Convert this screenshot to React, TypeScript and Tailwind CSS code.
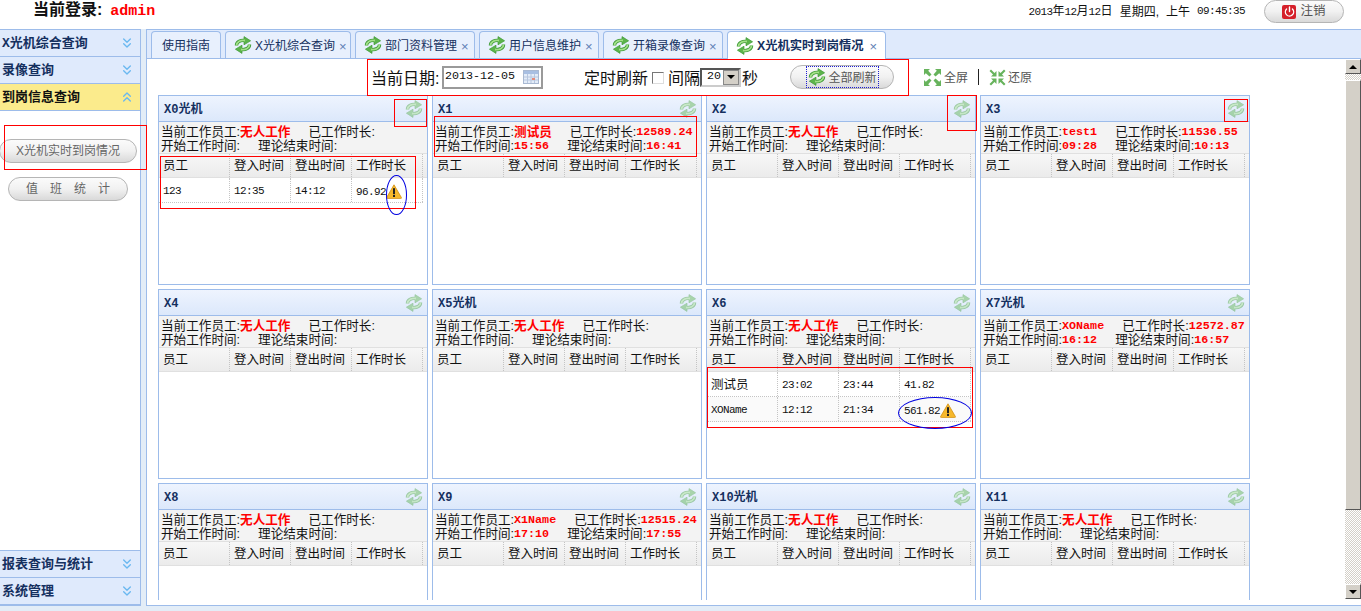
import React from 'react';
import { ChevronsDown, ChevronsUp, Power } from 'lucide-react';

const slab = "font-['Liberation_Mono','Noto_Sans_CJK_SC',monospace]";
const cjk = "font-['Liberation_Sans','Noto_Sans_CJK_SC',sans-serif]";

type Row = { name: string; latin?: boolean; in: string; out: string; dur: string; warn?: boolean };
type CardData = {
  title: string;
  worker?: string;
  workerLatin?: boolean;
  hours?: string;
  start?: string;
  end?: string;
  rows?: Row[];
};

const cards: CardData[] = [
  { title: 'X0光机', rows: [{ name: '123', latin: true, in: '12:35', out: '14:12', dur: '96.92', warn: true }] },
  { title: 'X1', worker: '测试员', hours: '12589.24', start: '15:56', end: '16:41' },
  { title: 'X2' },
  { title: 'X3', worker: 'test1', workerLatin: true, hours: '11536.55', start: '09:28', end: '10:13' },
  { title: 'X4' },
  { title: 'X5光机' },
  {
    title: 'X6',
    rows: [
      { name: '测试员', in: '23:02', out: '23:44', dur: '41.82' },
      { name: 'XOName', latin: true, in: '12:12', out: '21:34', dur: '561.82', warn: true },
    ],
  },
  { title: 'X7光机', worker: 'XOName', workerLatin: true, hours: '12572.87', start: '16:12', end: '16:57' },
  { title: 'X8' },
  { title: 'X9', worker: 'X1Name', workerLatin: true, hours: '12515.24', start: '17:10', end: '17:55' },
  { title: 'X10光机' },
  { title: 'X11' },
];

const tabs = [
  { label: 'X光机综合查询', w: 'w-[126px]' },
  { label: '部门资料管理', w: 'w-[120px]' },
  { label: '用户信息维护', w: 'w-[120px]' },
  { label: '开箱录像查询', w: 'w-[120px]' },
];

const RefreshIcon = ({ faded }: { faded?: boolean }) => (
  <svg width="18" height="18" viewBox="0 0 18 18" className={faded ? 'opacity-45 shrink-0' : 'shrink-0'}>
    <g>
      <path d="M2.500 9.500C2.500 6 6 3.800 11 4.500" fill="none" stroke="#3f9a38" strokeWidth="3.400" />
      <path d="M10 .6 16.600 4.800 10 8.800Z" fill="#5cb44a" stroke="#3f9a38" strokeWidth="0.700" strokeLinejoin="round" />
      <path d="M2.500 9.500C2.500 6 6 3.800 11 4.500" fill="none" stroke="#a3e088" strokeWidth="1.800" />
    </g>
    <g transform="rotate(180 9 9)">
      <path d="M2.500 9.500C2.500 6 6 3.800 11 4.500" fill="none" stroke="#3f9a38" strokeWidth="3.400" />
      <path d="M10 .6 16.600 4.800 10 8.800Z" fill="#5cb44a" stroke="#3f9a38" strokeWidth="0.700" strokeLinejoin="round" />
      <path d="M2.500 9.500C2.500 6 6 3.800 11 4.500" fill="none" stroke="#a3e088" strokeWidth="1.800" />
    </g>
  </svg>
);

const WarnIcon = () => (
  <svg width="16" height="15" viewBox="0 0 16 15" className="shrink-0">
    <path d="M8 .8 15.400 13.600a.8.8 0 0 1-.7 1H1.300a.8.8 0 0 1-.7-1Z" fill="#f6b82c" stroke="#d18f14" strokeWidth="0.800" />
    <rect x="7" y="4.200" width="2" height="6" fill="#222" />
    <rect x="7" y="11" width="2" height="2" fill="#222" />
  </svg>
);

const CalendarIcon = () => (
  <svg width="16" height="14" viewBox="0 0 16 14">
    <rect x="0.500" y="0.500" width="15" height="13" fill="#e3ecf8" stroke="#a9b9d2" />
    <rect x="1" y="1" width="14" height="3" fill="#a8bfe2" />
    <path d="M1 7h14M1 10h14M4.500 4v9M8 4v9M11.500 4v9" stroke="#b7c6de" strokeWidth="1" />
    <rect x="9" y="8" width="3" height="2" fill="#e58b7a" />
  </svg>
);

const ExpandIcon = ({ inward }: { inward?: boolean }) => (
  <svg width="17" height="17" viewBox="0 0 17 17">
    <g fill="#67b35c">
      {inward ? (
        <>
          <path d="M7.500 7.500V2L5.500 4 2 .5.500 2 4 5.500 2 7.500Z" />
          <path d="M9.500 7.500V2L11.500 4 15 .5 16.500 2 13 5.500 15 7.500Z" />
          <path d="M7.500 9.500V15L5.500 13 2 16.500.500 15 4 11.500 2 9.500Z" />
          <path d="M9.500 9.500V15L11.500 13 15 16.500 16.500 15 13 11.500 15 9.500Z" />
        </>
      ) : (
        <>
          <path d="M0 0H6L4.200 1.800 7.500 5.500 5.500 7.500 1.800 4.200 0 6Z" />
          <path d="M17 0H11L12.800 1.800 9.500 5.500 11.500 7.500 15.200 4.200 17 6Z" />
          <path d="M0 17H6L4.200 15.200 7.500 11.500 5.500 9.500 1.800 12.800 0 11Z" />
          <path d="M17 17H11L12.800 15.200 9.500 11.500 11.500 9.500 15.200 12.800 17 11Z" />
        </>
      )}
    </g>
  </svg>
);

const SideHead = ({ label, active }: { label: string; active?: boolean }) => (
  <div
    className={`flex h-[27px] items-center justify-between border-b border-[#9dbcea] pl-[2px] pr-[5px] ${
      active ? 'bg-[#fbeb8c]' : 'bg-[#dfeafc]'
    }`}
  >
    <span className={`${slab} pt-[2px] text-[13px] font-bold ${active ? 'text-[#111]' : 'text-[#15305f]'}`}>{label}</span>
    {active ? (
      <ChevronsUp size={16} strokeWidth={2} className="text-[#6ab8f0]" />
    ) : (
      <ChevronsDown size={16} strokeWidth={2} className="text-[#6ab8f0]" />
    )}
  </div>
);

const Num = ({ children, className = '' }: { children: React.ReactNode; className?: string }) => (
  <span className={`font-['Liberation_Mono',monospace] text-[11px] tracking-[-0.6px] text-[#111] ${className}`}>
    {children}
  </span>
);

const Red = ({ children }: { children: React.ReactNode }) => (
  <span className="font-['Liberation_Mono',monospace] text-[11.700px] font-bold text-[#f00]">{children}</span>
);

const cols = 'grid grid-cols-[71px_61px_61px_71px]';
const cell = 'flex items-center border-r border-dotted border-[#c4c4c4] pl-[4px]';

const Card = ({ card }: { card: CardData }) => (
  <div className="h-[190px] w-[270px] border border-[#9dbcea] bg-white">
    <div className="flex h-[26px] items-center justify-between border-b border-[#9dbcea] bg-gradient-to-b from-[#eef4fe] to-[#dce8fb] pr-[4px] pl-[5px]">
      <span className={`${slab} pt-[2px] text-[12px] font-bold text-[#15305f]`}>{card.title}</span>
      <RefreshIcon faded />
    </div>
    <div className={`${cjk} h-[31px] bg-[#f3f3f3] pt-[3px] pl-[2px] text-[12.600px] leading-[14px] text-[#111]`}>
      <div className="flex h-[14px] items-center whitespace-nowrap">
        <span>当前工作员工:</span>
        {card.worker ? (
          card.workerLatin ? (
            <Red>{card.worker}</Red>
          ) : (
            <span className="font-bold text-[#f00]">{card.worker}</span>
          )
        ) : (
          <span className="font-bold text-[#f00]">无人工作</span>
        )}
        <span className="ml-[18px]">已工作时长:</span>
        {card.hours && <Red>{card.hours}</Red>}
      </div>
      <div className="flex h-[14px] items-center whitespace-nowrap">
        <span>开始工作时间:</span>
        {card.start && <Red>{card.start}</Red>}
        <span className="ml-[18px]">理论结束时间:</span>
        {card.end && <Red>{card.end}</Red>}
      </div>
    </div>
    <div className="h-[25px] border-y border-[#e0e0e0] bg-gradient-to-b from-[#f7f7f7] to-[#ebebeb]">
      <div className={`${cols} h-full text-[12.500px] text-[#111] ${cjk}`}>
        {['员工', '登入时间', '登出时间', '工作时长'].map((h) => (
          <div key={h} className={`${cell} pt-[2px]`}>
            {h}
          </div>
        ))}
      </div>
    </div>
    {card.rows?.map((r, i) => (
      <div
        key={r.name}
        className={`${cols} h-[25px] w-[264px] border-b border-dotted border-[#c4c4c4] ${i % 2 ? 'bg-[#fafafa]' : 'bg-white'}`}
      >
        <div className={`${cell} pt-[2px]`}>
          {r.latin ? <Num>{r.name}</Num> : <span className={`${cjk} text-[12.500px] text-[#111]`}>{r.name}</span>}
        </div>
        <div className={`${cell} pt-[2px]`}>
          <Num>{r.in}</Num>
        </div>
        <div className={`${cell} pt-[2px]`}>
          <Num>{r.out}</Num>
        </div>
        <div className={`${cell} pt-[2px]`}>
          <Num className={r.warn ? 'mt-[3px]' : ''}>{r.dur}</Num>
          {r.warn && <WarnIcon />}
        </div>
      </div>
    ))}
  </div>
);

const PillButton = ({ children, className = '' }: { children: React.ReactNode; className?: string }) => (
  <div
    className={`flex items-center justify-center rounded-full border border-[#b5b5b5] bg-gradient-to-b from-[#fbfbfb] via-[#f1f1f1] to-[#d9d9d9] ${className}`}
  >
    {children}
  </div>
);

const ScrollArrow = ({ up }: { up?: boolean }) => (
  <div className="flex h-[15px] w-[16px] items-center justify-center border-t border-r border-b border-l border-t-white border-r-[#555] border-b-[#555] border-l-white bg-[#d4d0c8]">
    <div
      className={`h-0 w-0 border-x-[4px] border-x-transparent ${
        up ? 'border-b-[4px] border-b-black' : 'border-t-[4px] border-t-black'
      }`}
    />
  </div>
);

export default function App() {
  return (
    <div className={`relative h-[611px] w-[1361px] overflow-hidden bg-[#e3edf7] ${cjk}`}>
      <div className="flex h-[29px] items-start bg-white">
        <div className={`${slab} mt-[1px] ml-[33px] text-[16px] leading-[17px] font-bold text-[#111]`}>
          <span className={cjk}>当前登录:</span>
          <span className="ml-[8px] text-[15px] text-[#f00]">admin</span>
        </div>
        <div className="mt-[4px] ml-auto flex h-[15px] items-center gap-[7px] text-[12px] text-[#111]">
          <span>
            <Num>2013</Num>年<Num>12</Num>月<Num>12</Num>日
          </span>
          <span>星期四,</span>
          <span>上午</span>
          <Num>09:45:35</Num>
        </div>
        <PillButton className="mr-[17px] ml-[19px] h-[23px] w-[80px] gap-[4px] text-[12.500px] text-[#555]">
          <span className="flex h-[14px] w-[14px] items-center justify-center rounded-[2px] bg-[#d5202a]">
            <Power size={11} strokeWidth={3} className="text-white" />
          </span>
          注销
        </PillButton>
      </div>

      <div className="flex h-[577px]">
        <aside className="flex h-[577px] w-[141px] flex-col border-t border-r border-b-2 border-[#9dbcea] bg-white">
          <SideHead label="X光机综合查询" />
          <SideHead label="录像查询" />
          <SideHead label="到岗信息查询" active />
          <div className="flex flex-1 flex-col items-start pt-[28px]">
            <PillButton className="-ml-[1px] h-[24px] w-[138px] text-[12px] text-[#666]">X光机实时到岗情况</PillButton>
            <PillButton className="mt-[14px] ml-[8px] h-[24px] w-[120px] pl-[12px] text-[12px] tracking-[12px] text-[#666]">
              值班统计
            </PillButton>
          </div>
          <div className="border-t border-[#9dbcea]">
            <SideHead label="报表查询与统计" />
            <div className="-mb-px">
              <SideHead label="系统管理" />
            </div>
          </div>
        </aside>

        <main className="ml-[5px] flex h-[577px] flex-1 flex-col border-t border-b border-l border-[#9dbcea] bg-white">
          <div className="flex h-[29px] items-end gap-[4px] border-b border-[#9dbcea] bg-[#dfeafc] pl-[4px]">
            <div className="flex h-[27px] w-[70px] items-center justify-center rounded-t-[4px] border border-b-0 border-[#9dbcea] bg-[#e8f0fd] pt-[2px] text-[12px] text-[#15305f]">
              使用指南
            </div>
            {tabs.map((t) => (
              <div
                key={t.label}
                className={`flex h-[27px] ${t.w} items-center gap-[3px] rounded-t-[4px] border border-b-0 border-[#9dbcea] bg-[#e8f0fd] pl-[8px] text-[12px] whitespace-nowrap text-[#15305f]`}
              >
                <RefreshIcon />
                <span className="pt-[2px]">{t.label}</span>
                <span className="ml-[1px] pt-[3px] text-[13px] text-[#5f7fb5]">×</span>
              </div>
            ))}
            <div className="-mb-px flex h-[28px] w-[159px] items-center gap-[3px] rounded-t-[4px] border border-b-0 border-[#9dbcea] bg-white pl-[8px] text-[12.300px] font-bold whitespace-nowrap text-[#15305f]">
              <RefreshIcon />
              <span className="pt-[2px]">X光机实时到岗情况</span>
              <span className="ml-[3px] pt-[3px] text-[13px] font-normal text-[#5f7fb5]">×</span>
            </div>
          </div>

          <div className="flex min-h-0 flex-1">
            <div className="h-[541px] flex-1 overflow-hidden">
              <div className="flex h-[36px] items-center pl-[224px] text-[16px] text-[#111]">
                <span className="w-[71px] pt-[3px]">当前日期:</span>
                <div className="flex h-[23px] w-[101px] items-center justify-between border-2 border-[#9a9a9a] pr-[2px] pl-[1px]">
                  <span className="font-['Liberation_Mono',monospace] text-[11.700px] text-[#111]">2013-12-05</span>
                  <CalendarIcon />
                </div>
                <span className="ml-[41px] pt-[3px]">定时刷新</span>
                <div className="mt-[1px] ml-[4px] h-[12px] w-[12px] shrink-0 border border-[#777] border-r-[#ddd] border-b-[#ddd]" />
                <span className="ml-[4px] pt-[3px]">间隔</span>
                <div className="flex h-[19px] w-[41px] items-center justify-between border-2 border-[#555] border-r-[#ccc] border-b-[#ccc] pl-[5px]">
                  <span className="font-['Liberation_Mono',monospace] text-[11.700px] text-[#111]">20</span>
                  <div className="flex h-[15px] w-[16px] items-center justify-center border border-[#888] bg-[#d4d0c8]">
                    <div className="h-0 w-0 border-x-[4px] border-t-[4px] border-x-transparent border-t-black" />
                  </div>
                </div>
                <span className="ml-[1px] pt-[3px]">秒</span>
                <PillButton className="ml-[32px] h-[24px] w-[104px] text-[12px] text-[#555]">
                  <span className="flex items-center gap-[3px] border border-dotted border-[#1c1cd0] px-[1px]">
                    <RefreshIcon />
                    <span className="pt-[2px]">全部刷新</span>
                  </span>
                </PillButton>
                <div className="ml-[30px] flex items-center gap-[3px] text-[12px] text-[#555]">
                  <ExpandIcon />
                  <span className="pt-[2px]">全屏</span>
                </div>
                <div className="mx-[10px] h-[16px] w-px bg-[#222]" />
                <div className="flex items-center gap-[2px] text-[12px] text-[#555]">
                  <ExpandIcon inward />
                  <span className="pt-[2px]">还原</span>
                </div>
              </div>
              <div className="grid grid-cols-[repeat(4,270px)] gap-[4px] pl-[11px]">
                {cards.map((c) => (
                  <Card key={c.title} card={c} />
                ))}
              </div>
            </div>
            <div className="flex h-[540px] w-[16px] flex-col bg-[repeating-conic-gradient(#d4d0c8_0%_25%,#fff_0%_50%)] bg-[length:2px_2px]">
              <ScrollArrow up />
              <div className="mt-[6px] h-[430px] w-[16px] border border-t-white border-r-[#555] border-b-[#555] border-l-white bg-[#d4d0c8]" />
              <div className="mt-auto">
                <ScrollArrow />
              </div>
            </div>
          </div>
        </main>
      </div>

      {/* annotations drawn over the screenshot */}
      <div className="absolute top-[59px] left-[367px] h-[37px] w-[542px] border border-[#f00]" />
      <div className="absolute top-[99px] left-[394px] h-[28px] w-[33px] border border-[#f00]" />
      <div className="absolute top-[116px] left-[434px] h-[41px] w-[263px] border border-[#f00]" />
      <div className="absolute top-[95px] left-[947px] h-[36px] w-[30px] border border-[#f00]" />
      <div className="absolute top-[99px] left-[1224px] h-[23px] w-[24px] border border-[#f00]" />
      <div className="absolute top-[125px] left-[4px] h-[45px] w-[143px] border border-[#f00]" />
      <div className="absolute top-[156px] left-[160px] h-[53px] w-[256px] border border-[#f00]" />
      <div className="absolute top-[367px] left-[707px] h-[61px] w-[266px] border border-[#f00]" />
      <div className="absolute top-[175px] left-[386px] h-[40px] w-[21px] rounded-[50%] border border-[#0000e0]" />
      <div className="absolute top-[397px] left-[898px] h-[32px] w-[74px] rounded-[50%] border border-[#0000e0]" />
    </div>
  );
}
